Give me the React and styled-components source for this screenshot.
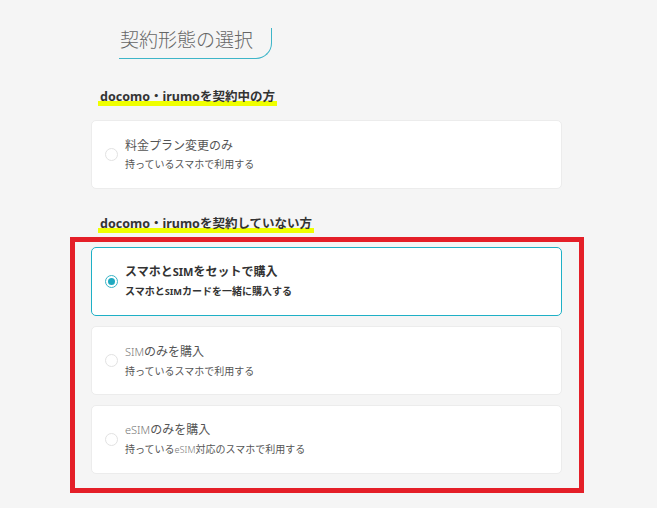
import styled, { createGlobalStyle } from "styled-components";

const GlobalStyle = createGlobalStyle`
  html, body {
    margin: 0;
    padding: 0;
    background: #f5f5f5;
  }
  body {
    font-family: "Noto Sans", "Noto Sans CJK JP", sans-serif;
    color: #555;
  }
`;

const Page = styled.div`
  width: 657px;
  height: 508px;
  box-sizing: border-box;
  padding: 28px 0 0 91px;
  background: #f5f5f5;
  overflow: hidden;
`;

const Column = styled.div`
  width: 471px;
  display: flex;
  flex-direction: column;
  align-items: flex-start;
`;

const SectionTitle = styled.h2`
  margin: 0 0 0 28px;
  padding: 0 18px 8px 1px;
  font-family: "Noto Sans CJK JP", sans-serif;
  font-size: 19px;
  font-weight: 300;
  line-height: 22px;
  color: #666;
  border-bottom: 1px solid #3eb5c8;
  border-right: 1px solid #3eb5c8;
  border-bottom-right-radius: 16px;
`;

const Heading = styled.h3`
  margin: ${(p) => p.$top}px 0 0 7px;
  font-size: 12.5px;
  font-weight: 700;
  line-height: 18px;
  color: #333;
`;

const Marker = styled.span`
  display: inline-block;
  padding: 0 2px;
  background: linear-gradient(transparent 70%, #efff00 70%);
`;

const Card = styled.div`
  width: 100%;
  height: 69px;
  box-sizing: border-box;
  display: flex;
  align-items: center;
  gap: 7px;
  padding: 0 13px;
  background: #fff;
  border-width: 1px;
  border-style: solid;
  border-color: ${(p) => (p.$checked ? "#1eb0c6" : "#ececec")};
  border-radius: 5px;
  cursor: pointer;
`;

const CardList = styled.div`
  width: 100%;
  display: flex;
  flex-direction: column;
  gap: 10px;
  margin-top: ${(p) => p.$top || 0}px;
`;

const Frame = styled.div`
  align-self: stretch;
  margin: 4px -22px 0 -21px;
  padding: 5px 17px 14px 16px;
  border: 5px solid #e41f28;
`;

const Radio = styled.span`
  flex: none;
  width: 13px;
  height: 13px;
  box-sizing: border-box;
  border-radius: 50%;
  background: #fff;
  border: ${(p) => (p.$checked ? "1.5px solid #3ab4c6" : "1px solid #e2e2e2")};
  display: flex;
  align-items: center;
  justify-content: center;

  &::after {
    content: "";
    width: 7px;
    height: 7px;
    border-radius: 50%;
    background: ${(p) => (p.$checked ? "#1fa9c0" : "transparent")};
  }
`;

const Texts = styled.div`
  display: flex;
  flex-direction: column;
  gap: 2px;
  margin-top: -1px;
  font-family: "Noto Sans CJK JP", sans-serif;
`;

const Title = styled.div`
  font-size: 12px;
  line-height: 18px;
  font-weight: ${(p) => (p.$checked ? 700 : 400)};
  color: ${(p) => (p.$checked ? "#333" : "#555")};
`;

const Sub = styled.div`
  font-size: 10px;
  line-height: 16px;
  font-weight: ${(p) => (p.$checked ? 700 : 400)};
  color: ${(p) => (p.$checked ? "#333" : "#555")};
`;

const Latin = styled.span`
  font-family: "Noto Sans", sans-serif;
  font-weight: ${(p) => (p.$checked ? 700 : 300)};
  font-size: 0.92em;
  color: ${(p) => (p.$checked ? "#333" : "#777")};
`;

const Option = ({ checked = false, title, sub }) => (
  <Card $checked={checked}>
    <Radio $checked={checked} />
    <Texts>
      <Title $checked={checked}>{title}</Title>
      <Sub $checked={checked}>{sub}</Sub>
    </Texts>
  </Card>
);

const App = () => {
  return (
    <Page>
      <GlobalStyle />
      <Column>
        <SectionTitle>契約形態の選択</SectionTitle>

        <Heading $top={29}>
          <Marker>docomo・irumoを契約中の方</Marker>
        </Heading>
        <CardList $top={14}>
          <Option title="料金プラン変更のみ" sub="持っているスマホで利用する" />
        </CardList>

        <Heading $top={26}>
          <Marker>docomo・irumoを契約していない方</Marker>
        </Heading>
        <Frame>
          <CardList>
            <Option
              checked
              title={<>スマホと<Latin $checked>SIM</Latin>をセットで購入</>}
              sub={<>スマホと<Latin $checked>SIM</Latin>カードを一緒に購入する</>}
            />
            <Option
              title={<><Latin>SIM</Latin>のみを購入</>}
              sub="持っているスマホで利用する"
            />
            <Option
              title={<><Latin>eSIM</Latin>のみを購入</>}
              sub={<>持っている<Latin>eSIM</Latin>対応のスマホで利用する</>}
            />
          </CardList>
        </Frame>
      </Column>
    </Page>
  );
};

export default App;
